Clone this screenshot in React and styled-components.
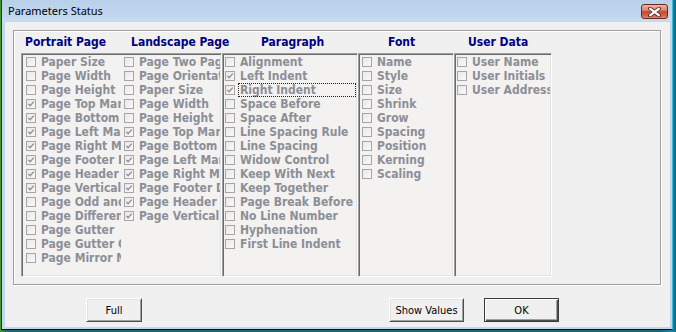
import React from "react";
import styled, { createGlobalStyle } from "styled-components";

const Global = createGlobalStyle`
  html, body { margin: 0; padding: 0; }
  body {
    width: 676px;
    height: 332px;
    overflow: hidden;
    background: linear-gradient(90deg, #4a9a34 0px, #2f7d3c 3px, #1b6670 8px, #1b6670 660px, #1a8aa6 672px, #14667a 676px);
  }
`;

const UI_FONT = `"DejaVu Sans Condensed", "Liberation Sans", sans-serif`;

const Window = styled.div`
  box-sizing: border-box;
  margin-left: 1px;
  width: 672px;
  height: 330px;
  border-left: 1px solid #1d3a44;
  border-right: 1px solid #38bfe0;
  border-bottom: 1px solid #101010;
  padding: 0 2px 2px 3px;
  background: linear-gradient(180deg, #b8d0ea 0px, #c6daf0 21px, #c3d7ec 22px, #c3d7ec 100%);
  display: flex;
  flex-direction: column;
`;

const TitleBar = styled.div`
  height: 22px;
  flex: none;
  display: flex;
  align-items: flex-start;
  padding-left: 3px;
`;

const Title = styled.div`
  flex: 1;
  font-family: "Noto Sans", "Liberation Sans", sans-serif;
  font-size: 11px;
  line-height: 21px;
  color: #000;
`;

const CloseButton = styled.div`
  box-sizing: border-box;
  width: 27px;
  height: 15px;
  margin-top: 4px;
  margin-right: 2px;
  border: 1px solid #6a2a22;
  border-radius: 3px;
  background: linear-gradient(180deg, #eeb3a4 0%, #dc8470 40%, #c74a30 52%, #cf6248 80%, #dc8a70 100%);
  display: flex;
  align-items: center;
  justify-content: center;
`;

const Client = styled.div`
  flex: 1;
  background: #f0f0f0;
  display: flex;
  flex-direction: column;
`;

const GroupBox = styled.div`
  box-sizing: border-box;
  margin: 8px 0 0 8px;
  width: 648px;
  height: 255px;
  border: 1px solid #a0a0a0;
  box-shadow: 1px 1px 0 #ffffff, inset 1px 1px 0 #ffffff;
  padding-left: 7px;
  display: flex;
  flex-direction: column;
`;

const HeaderRow = styled.div`
  display: flex;
  height: 22px;
  flex: none;
`;

const Header = styled.div`
  flex: none;
  width: ${(p) => p.$w}px;
  padding-left: ${(p) => p.$indent}px;
  box-sizing: border-box;
  white-space: nowrap;
  font-family: ${UI_FONT};
  font-weight: bold;
  font-size: 12px;
  line-height: 22px;
  color: #000080;
`;

const ListsRow = styled.div`
  display: flex;
  height: 224px;
`;

const ListBox = styled.div`
  box-sizing: border-box;
  flex: none;
  width: ${(p) => p.$w}px;
  height: 100%;
  background: #f4f1f1;
  border: 1px solid;
  border-color: #a0a0a0 #ffffff #ffffff #a0a0a0;
  box-shadow: inset 1px 1px 0 #696969, inset -1px -1px 0 #e3e3e3;
  padding: 1px;
  display: flex;
`;

const ListColumn = styled.div`
  box-sizing: border-box;
  width: ${(p) => (p.$w ? `${p.$w}px` : "auto")};
  flex: ${(p) => (p.$w ? "none" : "1")};
  min-width: 0;
  padding-left: ${(p) => p.$pad}px;
  display: flex;
  flex-direction: column;
  overflow: hidden;
`;

const Row = styled.div`
  display: flex;
  align-items: center;
  height: 14px;
  flex: none;
`;

const Check = styled.div`
  box-sizing: border-box;
  flex: none;
  width: 10px;
  height: 10px;
  margin-right: 3px;
  border: 1px solid #a6a6a6;
  background: linear-gradient(135deg, #e9e9e9 0%, #f8f8f8 100%);
  display: flex;
  align-items: center;
  justify-content: center;
`;

const Label = styled.div`
  flex: 1;
  min-width: 0;
  height: 14px;
  box-sizing: border-box;
  padding-left: 2px;
  white-space: nowrap;
  overflow: hidden;
  font-family: ${UI_FONT};
  font-weight: bold;
  font-size: 12px;
  line-height: 14px;
  color: #8b8f96;
  outline: ${(p) => (p.$focus ? "1px dotted #222" : "none")};
  outline-offset: -1px;
`;

const Footer = styled.div`
  display: flex;
  align-items: flex-start;
  margin-top: 13px;
  padding-left: 81px;
`;

const Button = styled.div`
  box-sizing: border-box;
  flex: none;
  width: ${(p) => p.$w}px;
  height: 24px;
  margin-left: ${(p) => p.$ml || 0}px;
  background: #f0f0f0;
  border: 1px solid;
  border-color: ${(p) => (p.$default ? "#3a3a3a" : "#ffffff #505050 #505050 #ffffff")};
  box-shadow: ${(p) =>
    p.$default
      ? "inset 1px 1px 0 #ffffff, inset -1px -1px 0 #505050, inset -2px -2px 0 #a0a0a0"
      : "inset 1px 1px 0 #e3e3e3, inset -1px -1px 0 #a0a0a0"};
  display: flex;
  align-items: center;
  justify-content: center;
  font-family: ${UI_FONT};
  font-size: 11px;
  color: #000;
`;

const portrait = [
  ["Paper Size", false],
  ["Page Width", false],
  ["Page Height", false],
  ["Page Top Margin", true],
  ["Page Bottom Margin", true],
  ["Page Left Margin", true],
  ["Page Right Margin", true],
  ["Page Footer Distance", true],
  ["Page Header Distance", true],
  ["Page Vertical Alignment", true],
  ["Page Odd and Even Pages Header Footer", false],
  ["Page Different First Page Header Footer", false],
  ["Page Gutter", false],
  ["Page Gutter On Top", false],
  ["Page Mirror Margins", false],
];

const landscape = [
  ["Page Two Pages On One", false],
  ["Page Orientation", false],
  ["Paper Size", false],
  ["Page Width", false],
  ["Page Height", false],
  ["Page Top Margin", true],
  ["Page Bottom Margin", true],
  ["Page Left Margin", true],
  ["Page Right Margin", true],
  ["Page Footer Distance", true],
  ["Page Header Distance", true],
  ["Page Vertical Alignment", true],
];

const paragraph = [
  ["Alignment", false],
  ["Left Indent", true],
  ["Right Indent", true, true],
  ["Space Before", false],
  ["Space After", false],
  ["Line Spacing Rule", false],
  ["Line Spacing", false],
  ["Widow Control", false],
  ["Keep With Next", false],
  ["Keep Together", false],
  ["Page Break Before", false],
  ["No Line Number", false],
  ["Hyphenation", false],
  ["First Line Indent", false],
];

const font = ["Name", "Style", "Size", "Shrink", "Grow", "Spacing", "Position", "Kerning", "Scaling"].map((n) => [n, false]);
const userData = ["User Name", "User Initials", "User Address"].map((n) => [n, false]);

function CheckMark() {
  return (
    <svg width="8" height="8" viewBox="0 0 8 8">
      <path d="M1.3 3.9 L3.1 5.8 L6.8 1.6" fill="none" stroke="#8e8e8e" strokeWidth="1.3" />
    </svg>
  );
}

function Items({ items }) {
  return items.map(([name, checked, focus]) => (
    <Row key={name}>
      <Check>{checked && <CheckMark />}</Check>
      <Label $focus={focus}>{name}</Label>
    </Row>
  ));
}

function CloseGlyph() {
  return (
    <svg width="13" height="10" viewBox="0 0 13 10">
      <path d="M2 1.5 L11 8.5 M11 1.5 L2 8.5" stroke="#5a2a24" strokeWidth="3.8" strokeLinecap="square" />
      <path d="M2.3 1.8 L10.7 8.2 M10.7 1.8 L2.3 8.2" stroke="#ffffff" strokeWidth="2.2" strokeLinecap="square" />
    </svg>
  );
}

export default function App() {
  return (
    <>
      <Global />
      <Window>
        <TitleBar>
          <Title>Parameters Status</Title>
          <CloseButton>
            <CloseGlyph />
          </CloseButton>
        </TitleBar>
        <Client>
          <GroupBox>
            <HeaderRow>
              <Header $w={100} $indent={4}>Portrait Page</Header>
              <Header $w={101} $indent={10}>Landscape Page</Header>
              <Header $w={136} $indent={39}>Paragraph</Header>
              <Header $w={96} $indent={30}>Font</Header>
              <Header $w={98} $indent={14}>User Data</Header>
            </HeaderRow>
            <ListsRow>
              <ListBox $w={201}>
                <ListColumn $w={98} $pad={3}>
                  <Items items={portrait} />
                </ListColumn>
                <ListColumn $w={99} $pad={3}>
                  <Items items={landscape} />
                </ListColumn>
              </ListBox>
              <ListBox $w={136}>
                <ListColumn $pad={1}>
                  <Items items={paragraph} />
                </ListColumn>
              </ListBox>
              <ListBox $w={96}>
                <ListColumn $pad={2}>
                  <Items items={font} />
                </ListColumn>
              </ListBox>
              <ListBox $w={98}>
                <ListColumn $pad={1}>
                  <Items items={userData} />
                </ListColumn>
              </ListBox>
            </ListsRow>
          </GroupBox>
          <Footer>
            <Button $w={56}>Full</Button>
            <Button $w={75} $ml={247}>Show Values</Button>
            <Button $w={75} $ml={20} $default>OK</Button>
          </Footer>
        </Client>
      </Window>
    </>
  );
}
